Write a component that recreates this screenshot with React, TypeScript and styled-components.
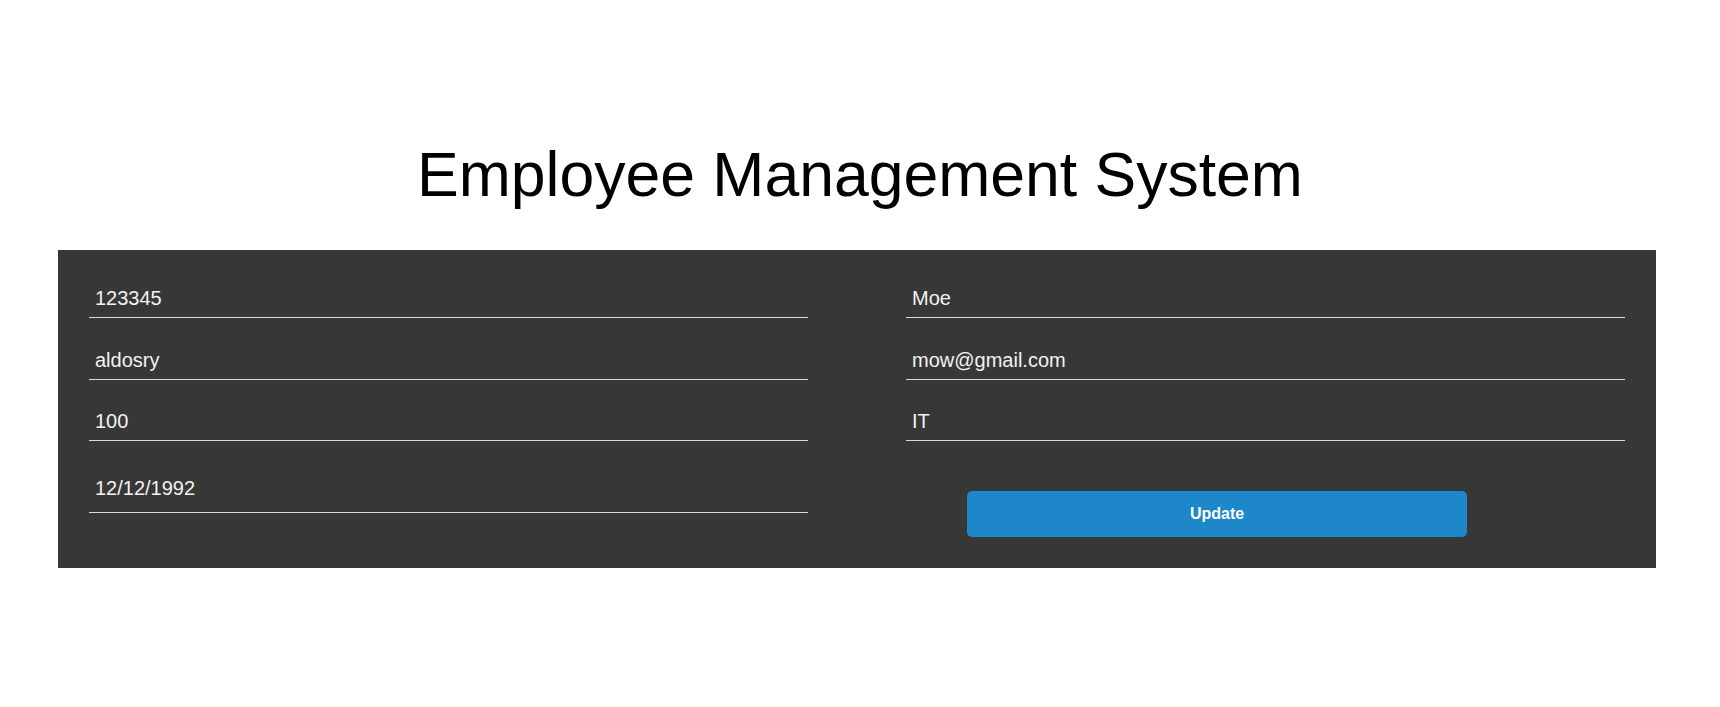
import * as React from 'react';
import styled, { createGlobalStyle } from 'styled-components';

const GlobalStyle = createGlobalStyle`
    html, body {
        margin: 0;
        padding: 0;
        background: #ffffff;
        font-family: "Liberation Sans", Arial, sans-serif;
    }
`;

const Page = styled.div`
    padding-top: 138px;
    min-height: 707px;
    box-sizing: border-box;
`;

const Title = styled.h1`
    margin: 0;
    text-align: center;
    font-size: 62.5px;
    font-weight: 400;
    color: #000;
    line-height: normal;
`;

const Panel = styled.form`
    margin: 40px 0 0 58px;
    width: 1598px;
    box-sizing: border-box;
    padding: 27px 31px 31px;
    background: #373737;
    display: grid;
    grid-template-columns: 1fr 1fr;
    column-gap: 98px;
    align-items: start;
`;

const Column = styled.div`
    display: flex;
    flex-direction: column;
    gap: 20.5px;
`;

// the date field sits a bit taller than the others
const Field = styled.input<{ $tall?: boolean }>`
    display: block;
    width: 100%;
    height: ${(p) => (p.$tall ? '51px' : '41px')};
    box-sizing: border-box;
    padding: ${(p) => (p.$tall ? '4px 6px 0' : '3px 6px 0')};
    border: none;
    border-bottom: 1px solid #dcdcdc;
    background: transparent;
    color: #f2f2f2;
    font-family: "Liberation Sans", Arial, sans-serif;
    font-size: 20px;
    outline: none;
`;

const UpdateButton = styled.button`
    margin: 29.5px 0 0 61px;
    width: 500px;
    height: 46px;
    border: none;
    border-radius: 5px;
    background: #1d87c9;
    color: #fff;
    font-family: "Liberation Sans", Arial, sans-serif;
    font-size: 16px;
    font-weight: 700;
    cursor: pointer;
`;

function App(): JSX.Element {
    return (
        <Page>
            <GlobalStyle />
            <Title>Employee Management System</Title>
            <Panel onSubmit={(e) => e.preventDefault()}>
                <Column>
                    <Field defaultValue="123345" />
                    <Field defaultValue="aldosry" />
                    <Field defaultValue="100" />
                    <Field $tall defaultValue="12/12/1992" />
                </Column>
                <Column>
                    <Field defaultValue="Moe" />
                    <Field defaultValue="mow@gmail.com" />
                    <Field defaultValue="IT" />
                    <UpdateButton type="submit">Update</UpdateButton>
                </Column>
            </Panel>
        </Page>
    );
}

export default App;
